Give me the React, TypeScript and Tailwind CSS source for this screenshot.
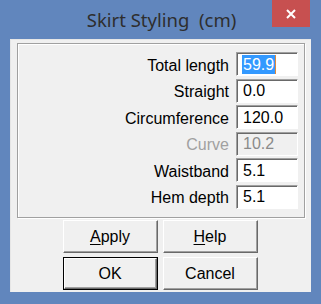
import React from "react";

// One row of the measurement form
interface FieldRowProps {
  label: string;
  value: string;
  disabled?: boolean;
  selected?: boolean;
}

const FieldRow: React.FC<FieldRowProps> = ({ label, value, disabled, selected }) => {
  return (
    <div className="flex items-center justify-end h-[24px]">
      <div className={`pr-[7px] pt-[3px] text-[16px] leading-none ${disabled ? "text-[#a0a0a0]" : "text-black"}`}>
        {label}
      </div>
      <div
        className={`w-[62px] h-[24px] flex items-center pl-[5px] border border-t-[#a0a0a0] border-l-[#a0a0a0] border-r-white border-b-white shadow-[inset_1px_1px_0_#696969] ${
          disabled ? "bg-[#f0f0f0] text-[#8a8a8a]" : "bg-white text-black"
        }`}
      >
        {selected ? (
          <span className="bg-[#3399ff] text-white text-[16px] leading-[19px] px-[1px] border-r border-[#e08a3a]">{value}</span>
        ) : (
          <span className="text-[16px] leading-[19px] pl-[1px]">{value}</span>
        )}
      </div>
    </div>
  );
};

interface DlgButtonProps {
  children: React.ReactNode;
  isDefault?: boolean;
}

const DlgButton: React.FC<DlgButtonProps> = ({ children, isDefault }) => {
  return (
    <div className={`w-[95px] h-[33px] ${isDefault ? "border border-black" : ""}`}>
      <div className="w-full h-full bg-[#f0f0f0] border border-t-white border-l-white border-r-[#696969] border-b-[#696969] shadow-[inset_-1px_-1px_0_#a0a0a0] flex items-center justify-center text-[16px] text-black">
        {children}
      </div>
    </div>
  );
};

const App: React.FC = () => {
  return (
    <div className="w-[321px] h-[304px] bg-[#6186bd] flex flex-col" style={{ fontFamily: '"Liberation Sans", Arial, sans-serif' }}>
      {/* Title bar */}
      <div className="h-[39px] flex relative">
        <div
          className="flex-1 flex justify-center pt-[6px] pl-[2px] text-[18.5px] text-[#2e2e2e] whitespace-pre"
          style={{ fontFamily: '"Noto Sans", "Open Sans", sans-serif' }}
        >
          Skirt Styling  (cm)
        </div>
        <div className="absolute right-[11px] top-0 w-[38px] h-[27px] bg-[#c75050] flex items-center justify-center">
          <svg width="10" height="10" viewBox="0 0 10 10">
            <path d="M1 1 L9 9 M9 1 L1 9" stroke="#fff" strokeWidth="2" />
          </svg>
        </div>
      </div>

      {/* Client area */}
      <div className="mx-[10px] h-[253px] bg-[#f0f0f0] border-t border-l border-[#e6e6e6] flex flex-col px-[6px] pt-[3px]">
        <div className="h-[175px] border border-[#a0a0a0] shadow-[1px_1px_0_#fff,inset_1px_1px_0_#fff] pt-[8px] pr-[6px] flex flex-col gap-[2.6px]">
          <FieldRow label="Total length" value="59.9" selected />
          <FieldRow label="Straight" value="0.0" />
          <FieldRow label="Circumference" value="120.0" />
          <FieldRow label="Curve" value="10.2" disabled />
          <FieldRow label="Waistband" value="5.1" />
          <FieldRow label="Hem depth" value="5.1" />
        </div>

        <div className="flex flex-col items-center gap-[4px] mt-[2px] pr-[2px]">
          <div className="flex gap-[5px]">
            <DlgButton>
              <span><span className="underline underline-offset-2">A</span>pply</span>
            </DlgButton>
            <DlgButton>
              <span><span className="underline underline-offset-2">H</span>elp</span>
            </DlgButton>
          </div>
          <div className="flex gap-[5px]">
            <DlgButton isDefault>OK</DlgButton>
            <DlgButton>Cancel</DlgButton>
          </div>
        </div>
      </div>
    </div>
  );
};

export default App;
